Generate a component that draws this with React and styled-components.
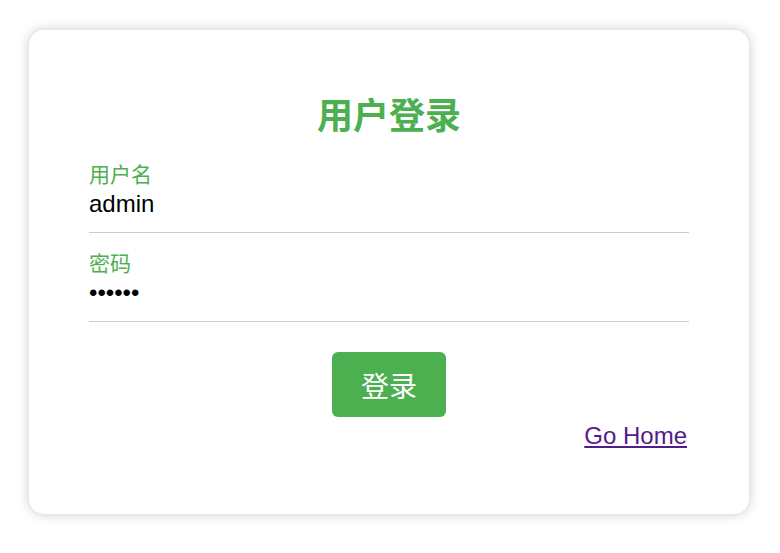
import React from "react";
import styled, { createGlobalStyle } from "styled-components";

const GlobalStyle = createGlobalStyle`
  html, body {
    margin: 0;
    padding: 0;
    background: #ffffff;
    font-family: "Liberation Sans", "Noto Sans CJK SC", Arial, sans-serif;
  }
`;

const Page = styled.div`
  padding: 30px 0 39px;
`;

const Card = styled.div`
  box-sizing: border-box;
  width: 720px;
  margin: 0 31px 0 29px;
  padding: 65px 60px 61px;
  background: #ffffff;
  border-radius: 15px;
  box-shadow: 0 0 12px rgba(0, 0, 0, 0.22);
  display: flex;
  flex-direction: column;
`;

const Title = styled.h2`
  margin: 0 0 24px;
  font-size: 36px;
  line-height: 44px;
  font-weight: bold;
  text-align: center;
  color: #4caf50;
  font-family: "Liberation Sans", "Noto Sans CJK SC", sans-serif;
`;

const Field = styled.div`
  display: flex;
  flex-direction: column;
  gap: 2px;
  margin-top: ${(p) => (p.$first ? "0" : "19px")};
`;

const Label = styled.label`
  font-size: 21px;
  line-height: 24px;
  color: #4caf50;
  font-family: "Liberation Sans", "Noto Sans CJK SC", sans-serif;
`;

const Input = styled.input`
  box-sizing: content-box;
  width: 600px;
  height: 30px;
  padding: 0 0 13px;
  margin: 0;
  border: none;
  border-bottom: 1px solid #cccccc;
  outline: none;
  background: transparent;
  font-size: 24px;
  line-height: 30px;
  color: #000000;
  font-family: "Liberation Sans", Arial, sans-serif;
`;

const Button = styled.button`
  align-self: center;
  margin-top: 30px;
  box-sizing: border-box;
  height: 65px;
  padding: 5px 29px 0;
  border: none;
  border-radius: 6px;
  background: #4caf50;
  color: #ffffff;
  font-size: 28px;
  line-height: 35px;
  font-family: "Liberation Sans", "Noto Sans CJK SC", sans-serif;
  cursor: pointer;
`;

const HomeRow = styled.div`
  margin-top: 5px;
  padding-right: 2px;
  text-align: right;
  line-height: 28px;
`;

const HomeLink = styled.a`
  font-size: 24px;
  color: #551a8b;
  text-decoration: underline;
  font-family: "Liberation Sans", Arial, sans-serif;
`;

export default function App() {
  return (
    <>
      <GlobalStyle />
      <Page>
        <Card>
          <Title>用户登录</Title>
          <Field $first>
            <Label>用户名</Label>
            <Input type="text" defaultValue="admin" readOnly />
          </Field>
          <Field>
            <Label>密码</Label>
            <Input type="password" defaultValue="123456" readOnly />
          </Field>
          <Button type="button">登录</Button>
          <HomeRow>
            <HomeLink href="#home">Go Home</HomeLink>
          </HomeRow>
        </Card>
      </Page>
    </>
  );
}
